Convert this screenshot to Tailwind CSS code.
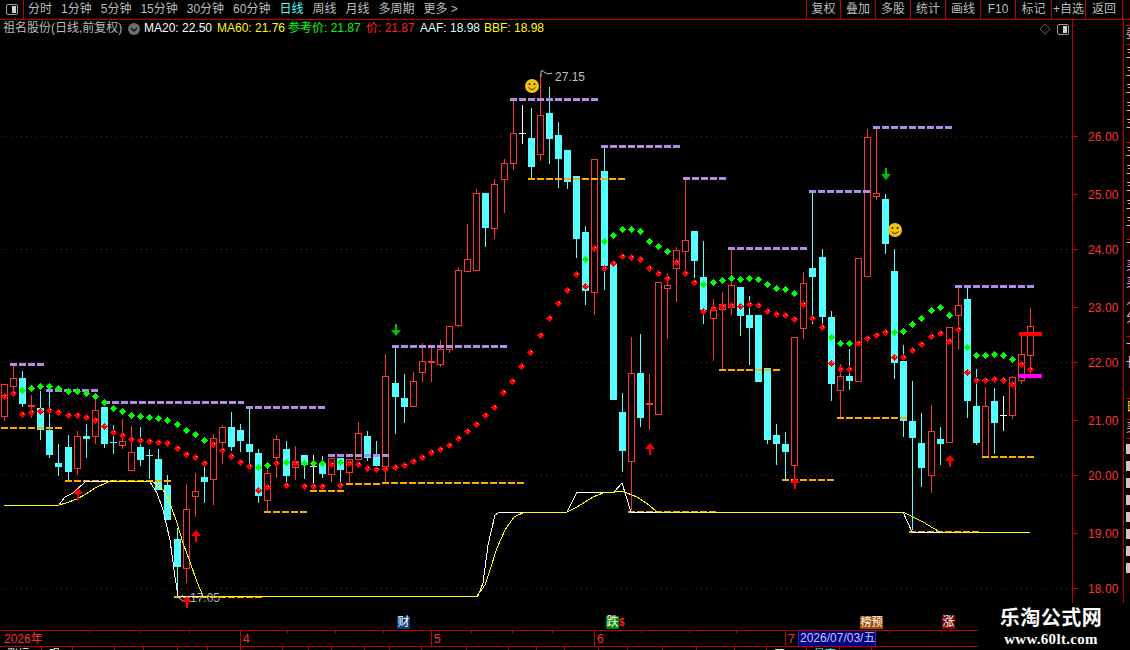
<!DOCTYPE html>
<html lang="zh">
<head>
    <meta charset="UTF-8">
    <title>祖名股份 日线</title>
    <script src="https://cdn.jsdelivr.net/npm/@tailwindcss/browser@4"></script>
</head>
<body class="bg-black">
<div class="relative w-[1130px] h-[650px] overflow-hidden bg-black font-['Liberation_Sans','Noto_Sans_CJK_SC',sans-serif] text-xs text-[#bcbcbc]">

    <!-- Toolbar -->
    <div class="flex h-5 border-b border-[#c00000] leading-[18px]">
        <div class="flex w-6 items-center justify-center border-r border-[#c00000]">
            <div class="flex h-[11px] w-3 rounded-[2px] border border-[#9a9a9a] p-px">
                <div class="w-1/2"></div><div class="w-1/2 bg-[#d0d0d0]"></div>
            </div>
        </div>
        <nav class="ml-1 flex gap-[9px]">
            <span>分时</span><span>1分钟</span><span>5分钟</span><span>15分钟</span><span>30分钟</span><span>60分钟</span>
            <span class="text-[#54ffff]">日线</span><span>周线</span><span>月线</span><span>多周期</span><span>更多 &gt;</span>
        </nav>
        <div class="ml-auto mr-[7px] flex border-r border-[#c00000] text-center">
            <span class="w-[34px] border-l border-[#c00000]">复权</span>
            <span class="w-[35px] border-l border-[#c00000]">叠加</span>
            <span class="w-[35px] border-l border-[#c00000]">多股</span>
            <span class="w-[35px] border-l border-[#c00000]">统计</span>
            <span class="w-[35px] border-l border-[#c00000]">画线</span>
            <span class="w-[35px] border-l border-[#c00000]">F10</span>
            <span class="w-[36px] border-l border-[#c00000]">标记</span>
            <span class="w-[34px] border-l border-[#c00000]">+自选</span>
            <span class="w-[37px] border-l border-[#c00000]">返回</span>
        </div>
    </div>

    <!-- Chart + axis + side strip -->
    <div class="flex h-[610px]">
        <svg id="chart" width="1123" height="610" viewBox="0 20 1123 610" shape-rendering="crispEdges" class="shrink-0"></svg>
        <div class="w-[7px] overflow-hidden border-l border-[#c00000] pl-[2px] leading-[17.5px] text-[#c8c8c8] whitespace-nowrap">
            <div class="h-[6px] border-b border-[#c00000]"></div>
            <div class="h-[19px] border-b border-[#c00000]">委</div>
            <div class="h-[98px] border-b border-[#c00000]">主<br>主<br>主<br>主<br>主</div>
            <div class="h-[97px] border-b border-[#c00000]">主<br>主<br>主<br>主<br>主</div>
            <div class="h-[97px] border-b border-[#c00000]">下<br>买<br>买<br>人<br>分</div>
            <div class="h-[62px] border-b border-[#c00000]">卡<br>长<br>卜</div>
            <div class="h-[21px] border-b border-[#c00000] text-[#e6e600]">日</div>
            <div class="h-[19px] border-b border-[#c00000]">买</div>
            <div class="mt-[5px] flex flex-col gap-[7px]">
                <div class="h-[10px] w-1 bg-[#c8c8c8]"></div><div class="h-[10px] w-1 bg-[#c8c8c8]"></div>
                <div class="h-[10px] w-1 bg-[#c8c8c8]"></div><div class="h-[10px] w-1 bg-[#c8c8c8]"></div>
                <div class="h-[10px] w-1 bg-[#c8c8c8]"></div><div class="h-[10px] w-1 bg-[#c8c8c8]"></div>
                <div class="h-[10px] w-1 bg-[#c8c8c8]"></div><div class="h-[10px] w-1 bg-[#c8c8c8]"></div>
            </div>
        </div>
    </div>

    <!-- Date axis -->
    <div class="relative flex h-[17px] w-[978px] border-y border-[#c00000] text-[#ff3232] leading-[16px]">
        <div class="w-[240px] pl-1">2026年</div>
        <div class="w-[191px] border-l border-[#c00000] pl-[2px]">4</div>
        <div class="w-[163px] border-l border-[#c00000] pl-[2px]">5</div>
        <div class="w-[191px] border-l border-[#c00000] pl-[2px]">6</div>
        <div class="flex-1 border-l border-[#c00000] pl-[2px]">7</div>
        <div class="absolute left-[798px] top-0 h-[15px] w-[78px] border-x border-[#3030c0] bg-[#000080] pl-px leading-[15px] text-[#c8c8ff] whitespace-nowrap">2026/07/03/五</div>
        <div id="ticks"></div>
    </div>

    <!-- Clipped bottom table row -->
    <div id="tableRow" class="flex h-[3px] w-[872px] overflow-hidden text-[11px] leading-[14px]"></div>

    <!-- Info line over the chart -->
    <div class="absolute left-[3px] top-[21px] flex h-[15px] items-center leading-[15px] whitespace-nowrap">
        <span class="w-[125px] text-[#bcbcbc]">祖名股份(日线,前复权)</span>
        <svg width="12" height="12" viewBox="0 0 12 12" class="mr-1"><circle cx="6" cy="6" r="6" fill="#6e6e6e"/><path d="M3 5l3 3 3-3" fill="none" stroke="#111" stroke-width="1.4"/></svg>
        <span class="w-[73px] text-white">MA20: 22.50</span>
        <span class="w-[71px] text-[#ffff00]">MA60: 21.76</span>
        <span class="w-[78px] text-[#00ff00]">参考价: 21.87</span>
        <span class="w-[54px] text-[#ff2020]">价: 21.87</span>
        <span class="w-[64px] text-[#d8ffff]">AAF: 18.98</span>
        <span class="text-[#ffff00]">BBF: 18.98</span>
    </div>
    <svg class="absolute left-[1039px] top-[23px]" width="12" height="12" viewBox="0 0 12 12"><path d="M6 .8L11.2 6 6 11.2.8 6z" fill="none" stroke="#666"/></svg>
    <div class="absolute left-[1057px] top-[24px] flex h-[11px] w-3 rounded-[2px] border border-[#9a9a9a] p-px">
        <div class="w-1/2"></div><div class="w-1/2 bg-[#d0d0d0]"></div>
    </div>

    <!-- Event badges on the time line -->
    <span class="absolute left-[397px] top-[616px] h-[13px] w-[13px] bg-[#0a3d78] text-center text-[12px] leading-[13px] text-white">财</span>
    <span class="absolute left-[606px] top-[616px] h-[13px] w-[13px] bg-[#008a00] text-center text-[12px] leading-[13px] text-white">跌</span>
    <span class="absolute left-[619px] top-[617px] text-[10px] font-bold leading-[12px] text-[#ff2020]">$</span>
    <span class="absolute left-[860px] top-[616px] h-[13px] w-[23px] overflow-hidden bg-[#a05000] text-center text-[11px] leading-[13px] text-white whitespace-nowrap">榜预</span>
    <span class="absolute left-[942px] top-[616px] h-[13px] w-[13px] bg-[#800000] text-center text-[12px] leading-[13px] text-white">涨</span>

    <!-- Watermark -->
    <div class="absolute left-[978px] top-[603px] flex h-[47px] w-[152px] flex-col items-center bg-black pt-1 pr-[6px] font-['Liberation_Serif','Noto_Sans_CJK_SC',serif] font-bold text-white">
        <div class="text-[20px] leading-[22px] tracking-[0.5px]">乐淘公式网</div>
        <div class="mt-[3px] text-[15px] leading-[15px] tracking-[0.3px]">www.60lt.com</div>
    </div>
</div>

<script>
    const RED = '#ff3232', CYAN = '#54ffff', PURPLE = '#b08ee8', ORANGE = '#ffab00', AXIS = '#c00000';

    // x, type (r / c / w), body top, body bottom, wick top, wick bottom
    const candles = [
        [4,'r',384,416,384,421],[13,'r',378,386,366,394],[22,'c',378,404,371,407],[31,'r',405,405,395,418],
        [40,'c',408,430,391,440],[49,'c',430,455,392,458],[58,'c',463,467,444,476],[68,'c',447,472,435,481],
        [77,'r',436,468,431,475],[86,'c',436,439,424,458],[95,'r',410,436,400,444],[104,'c',407,444,407,448],
        [113,'c',442,442,425,454],[122,'r',441,445,419,449],[131,'r',452,470,426,470],[140,'c',447,460,427,466],
        [149,'c',455,455,449,479],[158,'c',459,490,449,490],[167,'c',485,520,475,520],[177,'c',539,567,528,595],
        [186,'r',509,568,484,583],[195,'r',491,496,473,517],[204,'c',477,482,466,503],[213,'r',438,479,434,505],
        [222,'r',427,442,425,464],[231,'c',427,447,412,451],[240,'c',430,441,424,452],[249,'c',444,452,408,466],
        [258,'c',453,496,449,503],[267,'r',473,500,465,512],[276,'r',439,457,435,478],[286,'c',449,476,441,483],
        [295,'r',461,467,446,480],[304,'c',455,465,455,479],[313,'w',466,466,455,491],[322,'c',464,474,456,478],
        [331,'r',458,474,458,482],[340,'c',458,470,458,483],[349,'r',459,472,459,483],[358,'r',433,459,422,459],
        [367,'c',436,458,431,461],[376,'c',457,466,441,473],[385,'r',376,466,354,483],[395,'c',383,397,348,434],
        [404,'c',398,407,374,423],[413,'r',381,406,372,406],[422,'r',361,372,343,382],[431,'r',361,361,348,382],
        [440,'r',349,364,340,367],[449,'r',326,349,326,353],[458,'r',270,325,267,327],[467,'r',259,271,224,271],
        [476,'r',193,270,189,270],[485,'c',193,228,193,247],[494,'r',184,228,179,239],[504,'r',163,179,159,213],
        [513,'r',133,163,99,170],[522,'w',133,133,105,144],[531,'c',138,167,108,179],[540,'r',115,154,74,161],
        [549,'c',113,139,87,164],[558,'c',135,159,122,188],[567,'c',150,182,150,189],[576,'c',176,239,176,258],
        [585,'c',232,291,226,305],[594,'r',159,292,159,315],[604,'c',171,266,146,290],[613,'c',263,400,263,400],
        [622,'c',412,451,393,472],[631,'r',373,461,337,510],[640,'c',373,418,334,427],[649,'r',403,403,374,430],
        [658,'r',282,414,282,414],[667,'r',285,288,273,339],[676,'r',250,268,247,302],[685,'r',240,251,179,273],
        [694,'c',231,261,231,278],[703,'c',277,310,241,324],[713,'r',310,318,299,361],[722,'r',304,309,292,370],
        [731,'r',285,307,250,315],[740,'c',287,316,287,336],[749,'c',315,328,296,365],[758,'c',315,382,315,382],
        [767,'c',368,440,368,444],[776,'c',435,444,424,465],[785,'c',444,452,432,479],[794,'r',337,465,337,480],
        [803,'r',283,328,272,339],[812,'c',268,277,191,324],[822,'c',257,317,249,324],[831,'c',317,384,311,401],
        [840,'r',376,390,364,418],[849,'c',376,381,349,390],[858,'r',258,381,258,381],[867,'r',137,276,129,276],
        [876,'r',193,196,129,200],[885,'c',199,244,194,254],[894,'c',271,363,249,379],[903,'c',361,421,345,437],
        [912,'c',421,438,381,530],[921,'c',443,468,413,487],[931,'r',431,475,405,493],[940,'c',439,444,427,465],
        [949,'r',327,442,327,442],[958,'r',305,315,287,350],[967,'c',299,401,288,418],[976,'c',406,443,369,445],
        [985,'r',406,456,387,456],[994,'c',401,423,388,454],[1003,'w',415,415,396,431],[1012,'r',377,415,376,419],
        [1021,'r',354,380,335,384],[1030,'r',326,355,308,379]
    ];

    // y, x1, x2
    const purpleLevels = [[364,10,44],[390,46,99],[402,103,244],[407,246,326],[455,328,389],[346,392,508],[99,510,598],
        [146,601,680],[178,683,726],[248,728,807],[191,809,870],[127,873,953],[286,955,1034]];
    const orangeLevels = [[428,1,62],[481,65,171],[597,174,262],[512,264,308],[491,310,344],[484,346,380],[483,382,526],
        [179,528,626],[512,628,716],[370,719,780],[480,782,835],[418,837,907],[532,909,980],[457,982,1034]];

    const yellowLine = '4,505 59,505 66,503 77,499 86,494 95,488 108,482 113,481 152,481 163,490 170,503 177,523 183,543 190,562 197,582 203,596 477,596 485,585 490,570 497,548 505,530 514,517 525,512 567,512 577,507 593,497 603,493 615,492 622,491 637,497 649,505 657,512 903,512 913,517 923,522 933,528 940,532 1030,532';
    const whiteLine = '59,505 65,497 73,493 85,482 112,481 150,482 157,493 163,510 170,540 175,577 178,596 478,596 483,583 488,545 495,515 500,512 525,512 567,512 577,492 614,492 622,483 631,512 657,512 903,512 912,532 972,532';

    // x, y, r(ed) or g(reen)
    const upperDots = [[4,396,'r'],[13,393,'r'],[22,390,'g'],[31,388,'g'],[40,386,'g'],[49,386,'g'],[58,388,'g'],[68,391,'g'],[77,391,'g'],[86,393,'g'],
        [95,396,'g'],[104,402,'g'],[113,408,'g'],[122,411,'g'],[131,415,'g'],[140,416,'g'],[149,417,'g'],[158,418,'g'],[167,420,'g'],[177,424,'g'],
        [186,430,'g'],[195,434,'g'],[204,440,'g'],[213,444,'r'],[222,450,'r'],[231,456,'r'],[240,462,'r'],[249,466,'r'],[258,467,'g'],[267,465,'g'],
        [276,463,'r'],[286,462,'g'],[295,463,'r'],[304,463,'g'],[313,463,'g'],[322,463,'g'],[331,464,'r'],[340,462,'g'],[349,463,'r'],[358,464,'r'],
        [367,468,'r'],[376,469,'r'],[385,469,'r'],[395,467,'r'],[404,465,'r'],[413,461,'r'],[422,457,'r'],[431,452,'r'],[440,449,'r'],[449,445,'r'],
        [458,438,'r'],[467,431,'r'],[476,424,'r'],[485,415,'r'],[494,407,'r'],[503,392,'r'],[512,381,'r'],[521,366,'r'],[530,352,'r'],[540,335,'r'],
        [549,318,'r'],[558,303,'r'],[567,290,'r'],[576,274,'r'],[585,259,'g'],[594,248,'r'],[604,241,'g'],[613,235,'g'],[622,229,'g'],[631,229,'g'],
        [640,231,'g'],[649,241,'g'],[658,246,'g'],[667,251,'g'],[676,262,'r'],[685,273,'r'],[694,282,'r'],[703,284,'g'],[713,282,'g'],[722,280,'g'],
        [731,278,'g'],[740,279,'g'],[749,278,'g'],[758,279,'g'],[767,284,'g'],[776,288,'g'],[785,289,'g'],[794,293,'g'],[803,304,'r'],[812,318,'r'],
        [822,327,'r'],[831,337,'g'],[840,343,'g'],[849,343,'g'],[858,343,'r'],[867,338,'r'],[876,335,'r'],[885,332,'r'],[894,332,'g'],[903,331,'g'],
        [912,324,'g'],[921,318,'g'],[931,310,'g'],[940,307,'g'],[949,315,'g'],[958,329,'r'],[967,347,'g'],[976,355,'g'],[985,355,'g'],[994,354,'g'],
        [1003,355,'g'],[1012,359,'g'],[1021,364,'r'],[1030,369,'r']];
    const lowerDots = [[22,414],[31,412],[40,411],[49,410],[58,412],[68,415],[77,415],[86,417],[95,420],[104,426],[113,432],[122,435],[131,439],[140,440],
        [149,441],[158,442],[167,443],[177,448],[186,454],[195,457],[204,463],[258,490],[267,487],[286,485],[304,486],[313,486],[322,486],[340,485],
        [585,286],[604,268],[613,263],[622,256],[631,257],[640,259],[649,268],[658,273],[667,278],[703,311],[713,308],[722,306],[731,305],[740,306],
        [749,304],[758,305],[767,311],[776,314],[785,315],[794,319],[831,363],[840,369],[849,369],[894,357],[903,357],[912,350],[921,344],[931,336],
        [940,333],[949,341],[967,372],[976,380],[985,380],[994,379],[1003,380],[1012,384]];

    const arrowsUp = [[78,488],[187,596],[196,530],[650,443],[795,477],[950,455]];
    const arrowsDown = [[396,324],[886,168]];

    let out = '';

    // price grid and axis
    [136, 249, 362, 475, 588].forEach(y => {
        out += `<line x1="1" x2="1072" y1="${y}.5" y2="${y}.5" stroke="#900000" stroke-dasharray="1 4"/>`;
    });
    out += `<line x1="1072.5" x2="1072.5" y1="20" y2="603" stroke="${AXIS}"/>`;
    [['26.00',136],['25.00',194],['24.00',249],['23.00',307],['22.00',362],['21.00',420],['20.00',475],['19.00',533],['18.00',588]].forEach(([label, y]) => {
        out += `<line x1="1072" x2="1078" y1="${y}.5" y2="${y}.5" stroke="${AXIS}"/>`;
        out += `<text x="1088" y="${y + 5}" fill="${RED}" font-size="12" shape-rendering="auto" letter-spacing=".1">${label}</text>`;
    });

    // candles
    candles.forEach(([x, type, top, bottom, wickTop, wickBottom]) => {
        const color = type === 'r' ? RED : type === 'c' ? CYAN : '#ffffff';
        out += `<rect x="${x}" y="${wickTop}" width="1" height="${wickBottom - wickTop}" fill="${color}"/>`;
        if (top === bottom) {
            out += `<rect x="${x - 3}" y="${top}" width="7" height="${type === 'r' ? 2 : 1}" fill="${color}"/>`;
        } else if (type === 'r') {
            out += `<rect x="${x - 2.5}" y="${top + 0.5}" width="6" height="${bottom - top}" fill="#000" stroke="${RED}"/>`;
        } else {
            out += `<rect x="${x - 3}" y="${top}" width="7" height="${bottom - top}" fill="${color}"/>`;
        }
    });

    // support / resistance dashes
    const dashes = (levels, color, thickness) => levels.forEach(([y, x1, x2]) => {
        for (let x = x1; x < x2; x += 9) {
            out += `<rect x="${x}" y="${y - 1}" width="${Math.min(7, x2 - x)}" height="${thickness}" fill="${color}"/>`;
        }
    });
    dashes(purpleLevels, PURPLE, 3);
    dashes(orangeLevels, ORANGE, 2);

    // white and yellow lines
    out += `<polyline points="${whiteLine}" fill="none" stroke="#ffffff"/>`;
    out += `<polyline points="${yellowLine}" fill="none" stroke="#ffff00"/>`;

    // dot series
    const dot = (x, y, color) => {
        const a = x + 0.5, b = y + 0.5;
        out += `<polygon points="${a},${b - 3.6} ${a + 3.6},${b} ${a},${b + 3.6} ${a - 3.6},${b}" fill="${color}"/>`;
        if (color === '#ff0000') out += `<rect x="${x + 1}" y="${y - 1}" width="1" height="1" fill="#ffd0d0"/>`;
    };
    upperDots.forEach(([x, y, c]) => dot(x, y, c === 'g' ? '#00ff00' : '#ff0000'));
    lowerDots.forEach(([x, y]) => dot(x, y, '#ff0000'));

    // signal arrows
    arrowsUp.forEach(([x, y]) => {
        out += `<polygon points="${x},${y} ${x + 5},${y + 6} ${x + 1},${y + 6} ${x + 1},${y + 12} ${x - 1},${y + 12} ${x - 1},${y + 6} ${x - 5},${y + 6}" fill="#ff0000" shape-rendering="auto"/>`;
    });
    arrowsDown.forEach(([x, y]) => {
        out += `<polygon points="${x - 1},${y} ${x + 1},${y} ${x + 1},${y + 6} ${x + 5},${y + 6} ${x},${y + 12} ${x - 5},${y + 6} ${x - 1},${y + 6}" fill="#00c000" shape-rendering="auto"/>`;
    });

    // smileys
    [[532, 86], [895, 230]].forEach(([x, y]) => {
        out += `<g shape-rendering="auto"><circle cx="${x}" cy="${y}" r="7" fill="#f2c20f"/><circle cx="${x - 2.5}" cy="${y - 2}" r="1" fill="#3a2a00"/><circle cx="${x + 2.5}" cy="${y - 2}" r="1" fill="#3a2a00"/><path d="M${x - 3.5} ${y + 1.5}q3.5 4 7 0" fill="none" stroke="#3a2a00"/></g>`;
    });

    // high / low marks
    out += `<path d="M541 77V71h3M544 72l4 2 4-1" fill="none" stroke="#c0c0c0" shape-rendering="auto"/>`;
    out += `<text x="555" y="81" fill="#c0c0c0" font-size="12" shape-rendering="auto">27.15</text>`;
    out += `<path d="M183 595l-4 3 4 3" fill="none" stroke="#c0c0c0" shape-rendering="auto"/>`;
    out += `<text x="190" y="602" fill="#b0b0b0" font-size="12" shape-rendering="auto">17.05</text>`;

    // last day markers
    out += `<rect x="1019" y="332" width="23" height="4" fill="#ff0000"/>`;
    out += `<rect x="1019" y="374" width="23" height="4" fill="#ff00ff"/>`;

    document.getElementById('chart').innerHTML = out;

    // month ticks on the date axis
    document.getElementById('ticks').innerHTML = [89, 139, 189, 287, 335, 383, 471, 512, 552, 641, 689, 736, 889, 941]
        .map(x => `<span style="position:absolute;left:${x}px;top:0;width:1px;height:2px;background:#c00000"></span>`).join('');

    // the table below the date axis is only a few pixels tall in this window
    const cuts = [42, 73, 115, 144, 178, 208, 241, 283, 309, 332, 365, 390, 422, 467, 509, 537, 565, 599, 628, 663, 697, 735, 767, 807, 840, 872];
    const labels = { 0: ['涨幅', '#ffffff'], 1: ['现', '#ffffff'], 23: ['开', '#ffffff'], 24: ['最高', '#54ffff'] };
    let prev = 0, cells = '';
    cuts.forEach((x, i) => {
        const label = labels[i] || ['', '#fff'];
        cells += `<div style="width:${x - prev}px;color:${label[1]};border-right:1px solid #c00000;padding-left:7px;white-space:nowrap">${label[0]}</div>`;
        prev = x;
    });
    document.getElementById('tableRow').innerHTML = cells;
</script>
</body>
</html>
